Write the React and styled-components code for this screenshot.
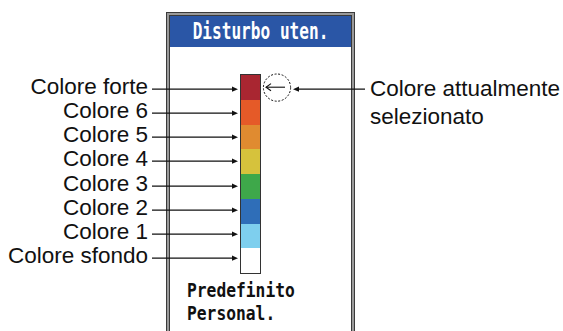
import styled, { createGlobalStyle } from 'styled-components'

const GlobalStyle = createGlobalStyle`
    body {
        margin: 0;
        background: #fff;
        overflow: hidden;
        font-family: "Liberation Sans", Arial, sans-serif;
        color: #111;
    }
`;

const Page = styled.div`
    display: flex;
    align-items: flex-start;
    padding-top: 12px;
    width: 563px;
    height: 331px;
    box-sizing: border-box;
`;

const LabelColumn = styled.div`
    width: 166px;
    flex-shrink: 0;
    padding-top: 63px;
    position: relative;
    z-index: 2;
`;

const LabelRow = styled.div`
    display: flex;
    justify-content: flex-end;
    align-items: flex-start;
    height: 24.15px;
    margin-right: -72px;
`;

const LabelText = styled.span`
    font-size: 22.5px;
    line-height: 24.15px;
    white-space: nowrap;
`;

const Leader = styled.svg`
    display: block;
    flex-shrink: 0;
    margin-left: 4px;
    overflow: visible;
`;

const Panel = styled.div`
    width: 189px;
    height: 330px;
    flex-shrink: 0;
    box-sizing: border-box;
    border: 1px solid #3a3a3a;
    padding: 3px;
    box-shadow: inset 0 0 0 2px #9a9a9a, inset 0 0 0 3px #3a3a3a;
    display: flex;
    flex-direction: column;
`;

const TitleBar = styled.div`
    height: 31px;
    background: #2a56a6;
    display: flex;
    align-items: center;
    justify-content: center;
`;

const TitleText = styled.span`
    display: inline-block;
    color: #fff;
    font-family: "DejaVu Sans Mono", monospace;
    font-weight: bold;
    font-size: 16.1px;
    transform: scaleY(1.4);
`;

const PanelBody = styled.div`
    padding: 27px 0 0 70px;
`;

const ColorBar = styled.div`
    width: 19px;
    height: 198px;
    border: 1px solid #333;
    display: flex;
    flex-direction: column;
`;

const Swatch = styled.div`
    flex: 1;
    background: ${p => p.$color};
`;

const Options = styled.div`
    padding: 6px 0 0 17px;
`;

const OptionLine = styled.div`
    font-family: "DejaVu Sans Mono", monospace;
    font-weight: bold;
    font-size: 16.3px;
    line-height: 22.5px;
    color: #111;
    transform: scaleY(1.18);
    transform-origin: left center;
    white-space: pre;
`;

const Callout = styled.div`
    display: flex;
    align-items: flex-start;
    padding-top: 63px;
    position: relative;
    z-index: 2;
`;

const CalloutText = styled.div`
    margin-left: 5px;
    font-size: 22.5px;
    line-height: 28px;
    white-space: nowrap;
`;

const swatches = ['#a92631', '#e55a28', '#e08b30', '#d6c23c', '#3ea84a', '#2f6eb8', '#7ecfee', '#ffffff'];

const labels = ['Colore forte', 'Colore 6', 'Colore 5', 'Colore 4', 'Colore 3', 'Colore 2', 'Colore 1', 'Colore sfondo'];

function LeaderArrow() {
    return (
        <Leader width="86" height="24" viewBox="0 0 86 24">
            <line x1="0" y1="14.2" x2="81" y2="14.2" stroke="#111" strokeWidth="1.3" />
            <polygon points="80,11.6 86,14.2 80,16.8" fill="#111" />
        </Leader>
    );
}

function CurrentMarker() {
    return (
        <Leader width="102" height="28" viewBox="0 0 102 28" style={{ marginLeft: -92 }}>
            <circle cx="14" cy="12.6" r="13.6" fill="none" stroke="#111" strokeWidth="1" strokeDasharray="2 1.6" />
            <line x1="3" y1="12.2" x2="22" y2="12.2" stroke="#111" strokeWidth="1.1" />
            <polyline points="8,8.6 3,12.2 8,15.8" fill="none" stroke="#111" strokeWidth="1.1" />
            <polygon points="30,14.2 36,11.6 36,16.8" fill="#111" />
            <line x1="35" y1="14.2" x2="102" y2="14.2" stroke="#111" strokeWidth="1.3" />
        </Leader>
    );
}

export default function App() {
    return (
        <>
            <GlobalStyle />
            <Page>
                <LabelColumn>
                    {labels.map((label) => (
                        <LabelRow key={label}>
                            <LabelText>{label}</LabelText>
                            <LeaderArrow />
                        </LabelRow>
                    ))}
                </LabelColumn>
                <Panel>
                    <TitleBar>
                        <TitleText>Disturbo uten.</TitleText>
                    </TitleBar>
                    <PanelBody>
                        <ColorBar>
                            {swatches.map((c) => (
                                <Swatch key={c} $color={c} />
                            ))}
                        </ColorBar>
                    </PanelBody>
                    <Options>
                        <OptionLine>Predefinito</OptionLine>
                        <OptionLine>Personal.</OptionLine>
                    </Options>
                </Panel>
                <Callout>
                    <CurrentMarker />
                    <CalloutText>
                        Colore attualmente<br />selezionato
                    </CalloutText>
                </Callout>
            </Page>
        </>
    );
}
